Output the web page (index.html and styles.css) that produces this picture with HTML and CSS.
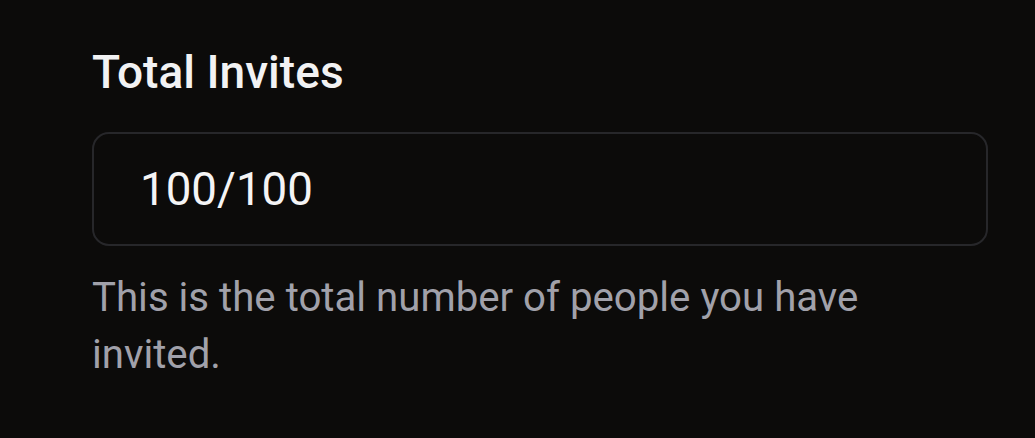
FILE: index.html
```html
<!DOCTYPE html>
<html lang="en">
<head>
  <meta charset="UTF-8" />
  <title>Total Invites</title>
  <meta name="viewport" content="width=device-width, initial-scale=1.0" />
  <link rel="stylesheet" href="styles.css">
</head>
<body>

<div class="field">
  <label class="field-label" for="invites">Total Invites</label>
  <input class="field-input" id="invites" type="text" value="100/100" readonly />
  <p class="field-help">This is the total number of people you have invited.</p>
</div>

</body>
</html>
```

FILE: styles.css
```css
body {
  margin: 0;
  background: #0c0b0a;
  font-family: Roboto, "Noto Sans", Arial, sans-serif;
  min-height: 100vh;
}
.field {
  width: 896px;
  padding: 49px 0 0 92px;
  display: flex;
  flex-direction: column;
}
.field-label {
  font-size: 46.1px; font-weight: 500; line-height: 46px;
  color: #f2f2f3;
  margin-bottom: 37px;
}
.field-input {
  box-sizing: border-box;
  width: 100%; height: 114px;
  margin: 0;
  padding: 0 46px;
  background: transparent;
  border: 2.5px solid #27272a;
  border-radius: 17px;
  color: #f4f4f5;
  font-family: inherit;
  font-size: 45.7px;
  outline: none;
}
.field-help {
  margin: 23px 0 0;
  font-size: 40.2px; line-height: 57px;
  color: #a1a1aa;
  max-width: 800px;
}
```
